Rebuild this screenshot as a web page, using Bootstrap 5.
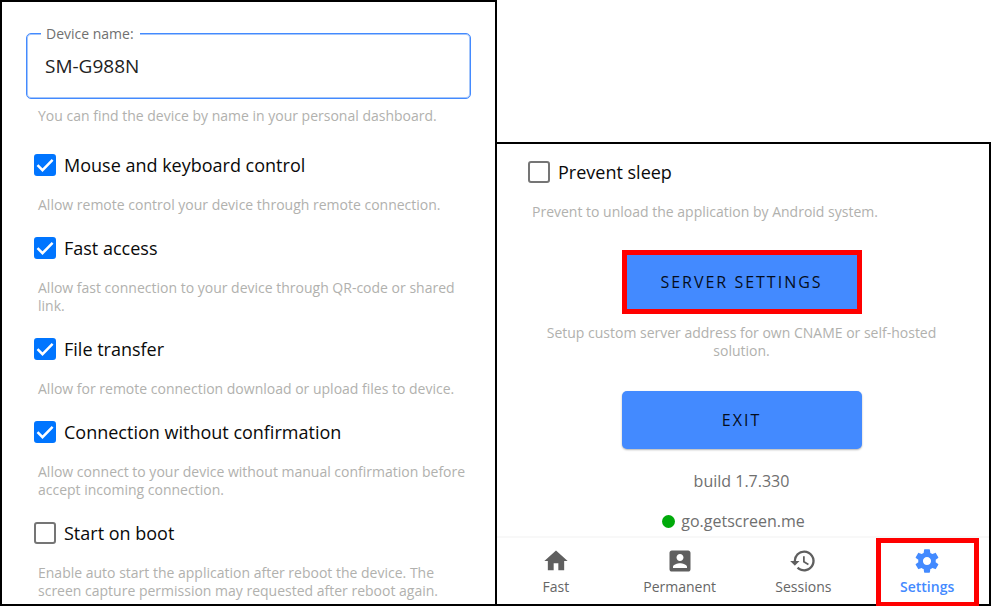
<!DOCTYPE html>
<html lang="en">
<head>
<meta charset="utf-8">
<meta name="viewport" content="width=device-width, initial-scale=1">
<title>Settings</title>
<link href="https://cdn.jsdelivr.net/npm/bootstrap@5.3.0/dist/css/bootstrap.min.css" rel="stylesheet">
<style>
  body { font-family: "Open Sans", "Noto Sans", sans-serif; color: #111; background: #fff; }
  .screens { display: grid; grid-template-columns: 497fr 494fr; align-items: end; }
  .screen-main { border: 2px solid #000; padding: 31px 24px 4px; }
  .screen-more { border: solid #000; border-width: 2px 2px 2px 0; padding-top: 16px; }

  .outlined { border: 1px solid #438aff; border-radius: 5px; box-shadow: 0 0 0 1px #a5c6fa inset; padding: 17px 16px 17px 18px; }
  .outlined label { top: -10px; left: 14px; padding: 0 6px 0 5px; font-size: 14px; line-height: 20px; color: #707070; background: #fff; }
  .outlined input { font-size: 19px; line-height: 30px; color: #222; outline: 0; }

  .hint { font-size: 14px; line-height: 18px; color: #b1b1ae; margin: 0; }
  .field-hint { margin: 8px 0 28px 12px; }
  .option { margin-bottom: 22px; padding-left: 8px; }
  .option-row { display: flex; align-items: center; gap: 8px; height: 24px; margin-bottom: 19px; }
  .option-row label { font-size: 18px; line-height: 24px; color: #0a0a0a; }
  .option .hint { padding-left: 4px; margin-right: -4px; }
  .option:last-child { margin-bottom: 0; }
  .option-row .form-check-input { width: 22px; height: 22px; margin: 0; border: 2px solid #757575; border-radius: 3px; flex: none; box-shadow: none; }
  .option-row .form-check-input:checked { background-color: #0075ff; border-color: #0075ff; background-size: 22px 22px; background-position: center; background-origin: border-box;
    background-image: url("data:image/svg+xml,%3Csvg xmlns='http://www.w3.org/2000/svg' viewBox='0 0 22 22'%3E%3Cpath d='M3.5 11.2l5 5L18.6 5.9' fill='none' stroke='%23fff' stroke-width='2.5'/%3E%3C/svg%3E"); }

  .more-option { padding: 0 24px 29px 23px; }
  .more-actions { padding-right: 3px; }
  .btn-action { width: 240px; height: 58px; font-size: 16px; line-height: 24px; letter-spacing: 2px; color: #050d1c; background: #438aff; border: 0; border-radius: 5px; box-shadow: 0 1px 2px rgba(0,0,0,.3); }
  .btn-action:hover { color: #050d1c; background: #3a7df0; }
  .highlight { outline: 5px solid #f00; outline-offset: -5px; }
  .btn-action.highlight { height: 64px; border-radius: 0; box-shadow: none; }
  .server-hint { width: 410px; max-width: 100%; margin: 10px 0 31px; }
  .status { font-size: 16px; line-height: 22px; color: #6f6f6f; }
  .build { margin: 21px 0 18px; }
  .host { gap: 6px; padding-right: 16px; }
  .dot { width: 13px; height: 13px; background: #00aa0a; }

  .tab-bar { margin-top: 4px; border-top: 2px solid #f8f8f8; }
  .tabs { margin-left: -3px; }
  .tabs a { flex: 1 1 0; height: 66px; padding-top: 9px; font-size: 14px; line-height: 20px; color: #666; text-decoration: none; }
  .tabs svg { width: 28px; height: 28px; margin-bottom: 2px; fill: #5f5f5f; }
  .tabs a.current { color: #438aff; font-weight: 600; }
  .tabs a.current svg { fill: #438aff; }
  .tab-frame { top: 0; bottom: -3px; left: 11px; right: 10px; border: 5px solid #f00; pointer-events: none; }
</style>
<script src="https://cdn.jsdelivr.net/npm/bootstrap@5.3.0/dist/js/bootstrap.bundle.min.js"></script>
</head>
<body>
<main class="screens">
  <section class="screen-main">
    <div class="outlined position-relative">
      <label class="position-absolute" for="device">Device name:</label>
      <input class="border-0 p-0 w-100 bg-transparent d-block" id="device" type="text" value="SM-G988N">
    </div>
    <p class="hint field-hint">You can find the device by name in your personal dashboard.</p>

    <div class="option">
      <div class="option-row"><input class="form-check-input" type="checkbox" id="mouse" checked><label for="mouse">Mouse and keyboard control</label></div>
      <p class="hint">Allow remote control your device through remote connection.</p>
    </div>
    <div class="option">
      <div class="option-row"><input class="form-check-input" type="checkbox" id="fast" checked><label for="fast">Fast access</label></div>
      <p class="hint">Allow fast connection to your device through QR-code or shared link.</p>
    </div>
    <div class="option">
      <div class="option-row"><input class="form-check-input" type="checkbox" id="files" checked><label for="files">File transfer</label></div>
      <p class="hint">Allow for remote connection download or upload files to device.</p>
    </div>
    <div class="option">
      <div class="option-row"><input class="form-check-input" type="checkbox" id="confirm" checked><label for="confirm">Connection without confirmation</label></div>
      <p class="hint">Allow connect to your device without manual confirmation before accept incoming connection.</p>
    </div>
    <div class="option">
      <div class="option-row"><input class="form-check-input" type="checkbox" id="boot"><label for="boot">Start on boot</label></div>
      <p class="hint">Enable auto start the application after reboot the device. The screen capture permission may requested after reboot again.</p>
    </div>
  </section>

  <section class="screen-more">
    <div class="more-option">
      <div class="option">
        <div class="option-row"><input class="form-check-input" type="checkbox" id="sleep"><label for="sleep">Prevent sleep</label></div>
        <p class="hint">Prevent to unload the application by Android system.</p>
      </div>
    </div>
    <div class="more-actions d-flex flex-column align-items-center text-center">
      <button type="button" class="btn btn-action highlight">SERVER SETTINGS</button>
      <p class="hint server-hint">Setup custom server address for own CNAME or self-hosted solution.</p>
      <button type="button" class="btn btn-action">EXIT</button>
      <div class="status build">build 1.7.330</div>
      <div class="status host d-flex align-items-center"><span class="dot rounded-circle"></span>go.getscreen.me</div>
    </div>
    <div class="tab-bar">
      <nav class="tabs d-flex" aria-label="Sections">
        <a class="d-flex flex-column align-items-center" href="#fast">
          <svg viewBox="0 0 24 24" aria-hidden="true"><path d="M10 20v-6h4v6h5v-8h3L12 3 2 12h3v8z"/></svg>Fast</a>
        <a class="d-flex flex-column align-items-center" href="#permanent">
          <svg viewBox="0 0 24 24" aria-hidden="true"><path d="M3 5v14c0 1.100.89 2 2 2h14c1.100 0 2-.9 2-2V5c0-1.100-.9-2-2-2H5c-1.110 0-2 .9-2 2zm12 4c0 1.660-1.340 3-3 3s-3-1.340-3-3 1.340-3 3-3 3 1.340 3 3zm-9 8c0-2 4-3.100 6-3.100s6 1.100 6 3.100v1H6v-1z"/></svg>Permanent</a>
        <a class="d-flex flex-column align-items-center" href="#sessions">
          <svg viewBox="0 0 24 24" aria-hidden="true"><path d="M13 3a9 9 0 0 0-9 9H1l3.890 3.890.07.14L9 12H6a7 7 0 1 1 2.060 4.940l-1.420 1.420A9 9 0 1 0 13 3zm-1 5v5l4.280 2.540.72-1.210-3.500-2.080V8z"/></svg>Sessions</a>
        <a class="current position-relative d-flex flex-column align-items-center" href="#settings" aria-current="page">
          <svg viewBox="0 0 24 24" aria-hidden="true"><path d="M19.430 12.980c.04-.32.07-.64.07-.98s-.03-.66-.07-.98l2.110-1.650c.19-.15.24-.42.12-.64l-2-3.460c-.12-.22-.39-.3-.61-.22l-2.490 1c-.52-.4-1.080-.73-1.690-.98l-.38-2.650C14.460 2.180 14.250 2 14 2h-4c-.25 0-.46.18-.49.42l-.38 2.650c-.61.25-1.170.59-1.690.98l-2.490-1c-.23-.09-.49 0-.61.22l-2 3.460c-.13.22-.07.49.12.64l2.110 1.650c-.04.32-.07.65-.07.98s.03.66.07.98l-2.110 1.650c-.19.15-.24.42-.12.64l2 3.460c.12.22.39.3.61.22l2.490-1c.52.4 1.080.73 1.690.98l.38 2.650c.03.24.24.42.49.42h4c.25 0 .46-.18.49-.42l.38-2.650c.61-.25 1.170-.59 1.690-.98l2.490 1c.23.09.49 0 .61-.22l2-3.460c.12-.22.07-.49-.12-.64l-2.110-1.650zM12 15.500c-1.930 0-3.500-1.570-3.500-3.500s1.570-3.500 3.500-3.500 3.500 1.570 3.500 3.500-1.570 3.500-3.500 3.500z"/></svg>Settings
          <span class="tab-frame position-absolute"></span></a>
      </nav>
    </div>
  </section>
</main>
</body>
</html>
